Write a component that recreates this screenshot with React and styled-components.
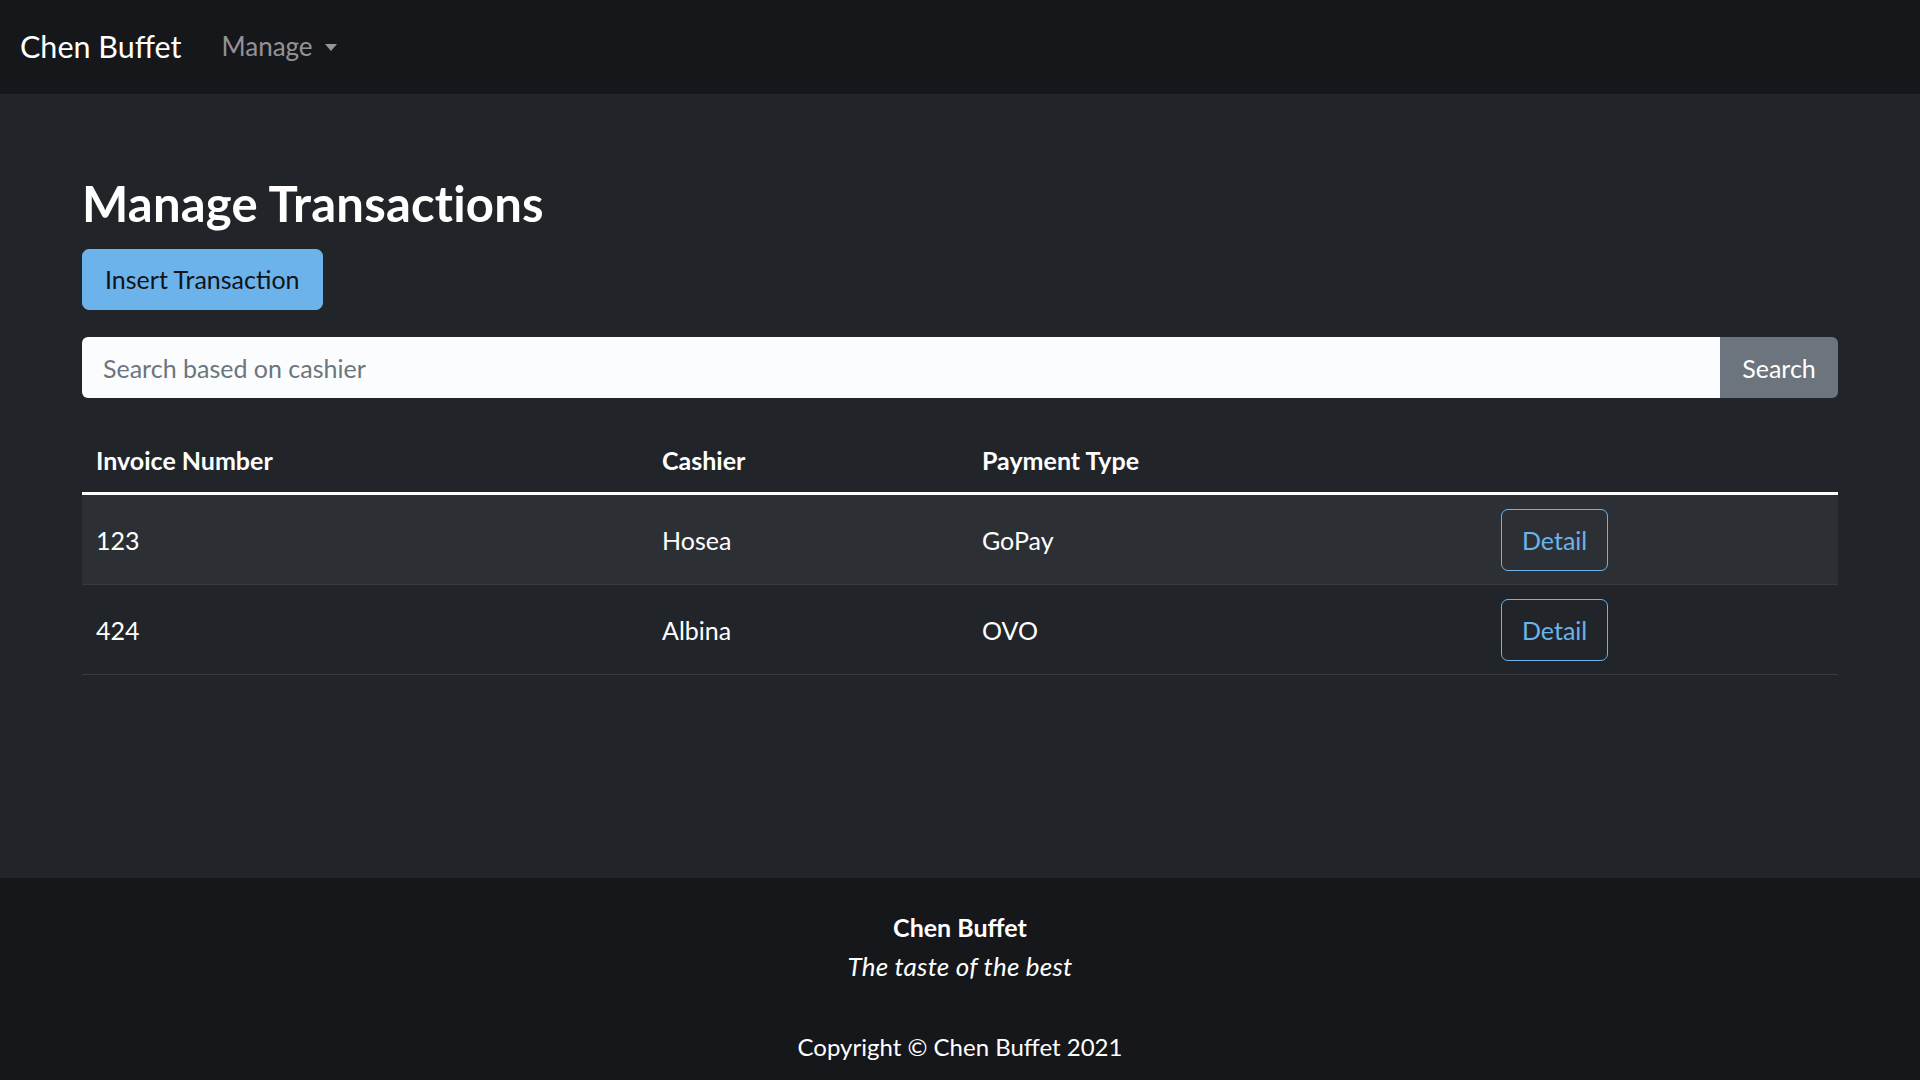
import React from 'react'
import styled, { createGlobalStyle } from 'styled-components'

const GlobalStyle = createGlobalStyle`
	* { box-sizing: border-box; }
	body {
		margin: 0;
		background: #212529;
		color: #fff;
		font-family: Lato, "Open Sans", sans-serif;
	}
`

const Page = styled.div`
	min-height: 100vh;
	display: flex;
	flex-direction: column;
`

const Navbar = styled.nav`
	height: 94px;
	background: #16171b;
	display: flex;
	align-items: center;
	padding: 0 20px;
	gap: 40px;
`

const Brand = styled.a`
	font-size: 30.5px;
	color: #fff;
	text-decoration: none;
	line-height: 1;
	padding-bottom: 2px;
`

const NavLink = styled.a`
	display: flex;
	align-items: center;
	font-size: 26px;
	color: rgba(255, 255, 255, 0.55);
	text-decoration: none;
	line-height: 1;
	padding-bottom: 2px;

	&::after {
		content: "";
		margin-left: 12px;
		margin-top: 2px;
		border-top: 7px solid rgba(255, 255, 255, 0.55);
		border-left: 6px solid transparent;
		border-right: 6px solid transparent;
	}
`

const Main = styled.main`
	flex: 1;
	padding: 79px 82px 40px;
`

const Title = styled.h1`
	margin: 0 0 16px;
	font-size: 49px;
	font-weight: 700;
	line-height: 60px;
	letter-spacing: 0.2px;
`

const Button = styled.button`
	font-family: inherit;
	font-size: 25px;
	line-height: ${p => p.outline ? '38px' : '37px'};
	padding: 11px ${p => p.outline ? '20px' : '22px'};
	border-radius: 7px;
	cursor: pointer;
	border: 1px solid #6cb2eb;
	background: ${p => p.outline ? 'transparent' : '#6cb2eb'};
	color: ${p => p.outline ? '#6cb2eb' : '#111418'};
`

const SearchBar = styled.form`
	display: flex;
	margin-top: 27px;
	height: 61px;
`

const SearchInput = styled.input`
	flex: 1;
	border: none;
	border-radius: 6px 0 0 6px;
	background: #fbfcfd;
	padding: 0 21px;
	font-family: inherit;
	font-size: 25px;
	color: #212529;
	outline: none;

	&::placeholder {
		color: #6c757d;
	}
`

const SearchButton = styled.button`
	width: 118px;
	border: none;
	border-radius: 0 6px 6px 0;
	background: #6c757d;
	color: #fff;
	font-family: inherit;
	font-size: 25px;
	cursor: pointer;
`

const Table = styled.table`
	width: 100%;
	margin-top: 37px;
	border-collapse: collapse;
	table-layout: fixed;
	font-size: 25px;
`

const Th = styled.th`
	text-align: left;
	font-weight: 700;
	line-height: 37px;
	padding: 7px 14px 13px;
	border-bottom: 3px solid #fff;
	width: ${p => p.w ? p.w + 'px' : 'auto'};
`

const Row = styled.tr`
	background: ${p => p.striped ? '#2c3034' : 'transparent'};
	border-bottom: 1px solid #373b3e;
`

const Td = styled.td`
	padding: 14px 14px 13px;
	line-height: 37px;
	vertical-align: middle;
`

const Footer = styled.footer`
	background: #16171b;
	text-align: center;
	padding: 30px 0 14px;
	font-size: 24px;
	line-height: 39px;
`

const FooterName = styled.div`
	font-weight: 700;
	font-size: 25px;
`

const Tagline = styled.div`
	font-style: italic;
	font-size: 26px;
	letter-spacing: 0.2px;
`

const Copyright = styled.div`
	margin-top: 41px;
`

const transactions = [
	{ invoice: '123', cashier: 'Hosea', payment: 'GoPay' },
	{ invoice: '424', cashier: 'Albina', payment: 'OVO' },
]

export default function App() {
	return (
		<Page>
			<GlobalStyle />
			<Navbar>
				<Brand href="#">Chen Buffet</Brand>
				<NavLink href="#">Manage</NavLink>
			</Navbar>
			<Main>
				<Title>Manage Transactions</Title>
				<Button>Insert Transaction</Button>
				<SearchBar onSubmit={e => e.preventDefault()}>
					<SearchInput placeholder="Search based on cashier" />
					<SearchButton>Search</SearchButton>
				</SearchBar>
				<Table>
					<thead>
						<tr>
							<Th w={566}>Invoice Number</Th>
							<Th w={320}>Cashier</Th>
							<Th w={519}>Payment Type</Th>
							<Th></Th>
						</tr>
					</thead>
					<tbody>
						{transactions.map((t, i) => (
							<Row key={t.invoice} striped={i % 2 === 0}>
								<Td>{t.invoice}</Td>
								<Td>{t.cashier}</Td>
								<Td>{t.payment}</Td>
								<Td><Button outline>Detail</Button></Td>
							</Row>
						))}
					</tbody>
				</Table>
			</Main>
			<Footer>
				<FooterName>Chen Buffet</FooterName>
				<Tagline>The taste of the best</Tagline>
				<Copyright>Copyright © Chen Buffet 2021</Copyright>
			</Footer>
		</Page>
	)
}
